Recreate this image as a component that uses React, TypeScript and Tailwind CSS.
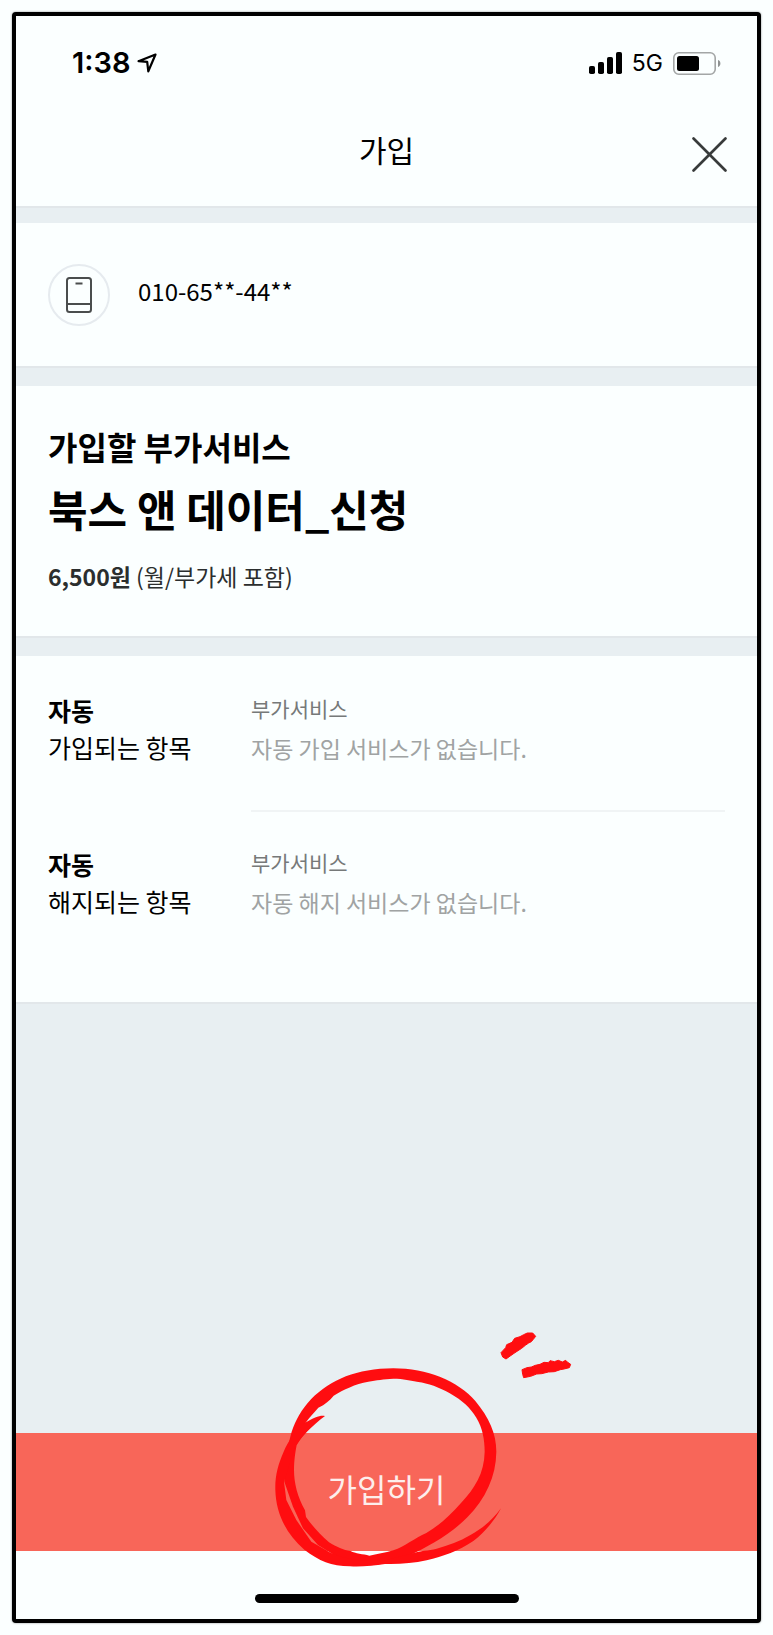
import React from "react";

const autoItems = [
  { action: "가입되는 항목", category: "부가서비스", message: "자동 가입 서비스가 없습니다." },
  { action: "해지되는 항목", category: "부가서비스", message: "자동 해지 서비스가 없습니다." },
];

function StatusBar() {
  return (
    <div className="flex h-[94px] items-center justify-between pl-14 pr-9 font-['Inter',sans-serif] text-black">
      <div className="flex items-center gap-1.5">
        <span className="text-[29px] font-semibold leading-8">1:38</span>
        <svg width="20" height="20" viewBox="0 0 20 20" fill="none" stroke="black" strokeWidth="2.2" strokeLinejoin="round">
          <path d="M18.500 1.500 1.500 8.200 10.200 8.800 11.300 18.300z" />
        </svg>
      </div>
      <div className="flex items-center gap-2.5">
        <svg width="33" height="22" viewBox="0 0 33 22" fill="black">
          <rect x="0" y="14" width="6" height="8" rx="1.8" />
          <rect x="9" y="10" width="6" height="12" rx="1.8" />
          <rect x="18" y="5" width="6" height="17" rx="1.8" />
          <rect x="27" y="0" width="6" height="22" rx="1.8" />
        </svg>
        <span className="text-[23px] leading-8">5G</span>
        <svg width="48" height="23" viewBox="0 0 48 23">
          <rect x="0.8" y="0.8" width="41.4" height="21.4" rx="5" fill="none" stroke="#a3a6a6" strokeWidth="1.6" />
          <rect x="4" y="4" width="22" height="15" rx="2.5" fill="black" />
          <path d="M45 8c1.6.6 2.4 1.9 2.4 3.500S46.600 14.400 45 15z" fill="#8f9292" />
        </svg>
      </div>
    </div>
  );
}

function PhoneIcon() {
  return (
    <svg width="26" height="36" viewBox="0 0 26 36" fill="none" stroke="#4a4d4d" strokeWidth="2">
      <rect x="1" y="1" width="24" height="34" rx="2.500" />
      <path d="M1 27h24M9.500 6.500h7" />
    </svg>
  );
}

// Hand-drawn ring and spark marks around the submit label
function Scribble() {
  return (
    <svg
      className="pointer-events-none absolute -bottom-[18px] left-1/2 -ml-[114px]"
      width="300"
      height="240"
      viewBox="99 57 900 720"
      fill="#ff0d10"
      aria-hidden="true"
    >
      <path
        fillRule="evenodd"
        d="M460 175C560 175 655 213 706 273C747 323 769 370 769 425C768 500 737 565 682 622C627 677 562 710 502 740C460 755 420 764 390 766C340 766 300 748 269 727L234 705L189 655L159 590L133 515C131 455 143 410 155 365C168 330 183 300 213 268C273 208 350 176 460 175Z
        M460 206C490 206 513 212 535 216C562 219 600 233 628 249C670 273 690 293 709 323C728 354 734 390 734 425C733 490 704 535 663 579C627 619 594 649 559 669C524 684 495 709 460 721C435 728 410 733 388 737C370 732 345 731 332 723C310 721 290 711 267 697C241 674 216 647 198 621L195 601C173 561 162 520 162 480C162 452 166 425 170 406C186 381 198 365 210 352L196 340C207 323 221 309 235 293C256 283 269 271 281 257C311 239 345 222 385 215C410 211 430 207 460 206Z"
      />
      <path d="M255 318C243 314 224 321 195 338C165 363 143 396 131 425C114 465 105 495 106 540C108 610 138 672 193 719C238 753 273 768 330 769C360 771 400 768 435 762C480 763 520 760 560 751C610 739 655 723 700 693C735 666 765 630 783 595C755 633 725 656 690 676C660 694 625 706 590 716C565 723 540 721 518 730L440 750C360 760 300 742 269 727L214 695L169 630L139 570L132 515L165 410C180 385 218 345 255 318Z" />
      <path
        stroke="#ff0d10"
        strokeWidth="3"
        strokeLinejoin="round"
        d="M783 128L797 113L800 104L816 97L824 85L840 80L851 74L862 69L878 69L887 79L880 88L874 95L866 99L856 106L845 115L834 122L822 130L812 137L798 147L788 141Z
        M846 179L861 173L874 171L886 166L900 163L912 157L925 158L930 152L943 155L955 151L967 156L977 151L983 157L992 163L988 173L972 177L961 179L943 185L925 186L905 191L890 192L872 199L851 203L848 193Z"
      />
    </svg>
  );
}

export default function App() {
  return (
    <div className="flex min-h-screen flex-col bg-[#fbffff] p-3 font-['Noto_Sans_CJK_KR',sans-serif]">
      <div className="flex flex-1 flex-col rounded-[4px] border-4 border-black bg-[#fbffff] shadow-[0_0_2px_#00000080]">
        <StatusBar />

        <header className="grid h-24 grid-cols-[1fr_auto_1fr] items-center px-[30px] pb-2">
          <h1 className="col-start-2 pb-2.5 text-[30px] leading-10 text-black">가입</h1>
          <button type="button" aria-label="닫기" className="justify-self-end">
            <svg width="35" height="35" viewBox="0 0 34 34" stroke="#383b3b" strokeWidth="2.600" strokeLinecap="round">
              <path d="M1.500 1.500l31 31M32.500 1.500l-31 31" />
            </svg>
          </button>
        </header>

        <main className="flex flex-1 flex-col border-t-2 border-[#e2e7ea] bg-[#e8eff2]">
          <section className="mt-[15px] flex h-[145px] items-center gap-7 border-b-2 border-[#e2e7ea] bg-[#fbffff] px-8">
            <div className="flex h-[62px] w-[62px] items-center justify-center rounded-full border-2 border-[#e6ebef]">
              <PhoneIcon />
            </div>
            <p className="pb-2 text-2xl leading-9 text-black">010-65**-44**</p>
          </section>

          <section className="mt-[18px] border-b-2 border-[#e2e7ea] bg-[#fbffff] px-8 pb-[42px] pt-9 text-black">
            <h2 className="text-[32px] font-bold leading-[48px]">가입할 부가서비스</h2>
            <p className="mt-2 text-[43px] font-bold leading-[60px]">북스 앤 데이터_신청</p>
            <p className="mt-5 text-[23px] leading-9 text-[#2b2e2e]">
              <span className="font-bold">6,500원</span> (월/부가세 포함)
            </p>
          </section>

          <dl className="mt-[18px] border-b-2 border-[#e2e7ea] bg-[#fbffff] px-8 pb-9 pt-0.5">
            {autoItems.map((item, idx) => (
              <div key={item.action} className="grid grid-cols-[203px_1fr]">
                <dt className="pt-[34px] text-[25px] leading-[37px] text-black">
                  <strong className="block font-bold">자동</strong>
                  {item.action}
                </dt>
                <dd
                  className={`border-b-2 pb-[42px] pt-[30px] ${
                    idx < autoItems.length - 1 ? "border-[#f0f4f5]" : "border-transparent"
                  }`}
                >
                  <p className="text-[21px] leading-10 text-[#767979]">{item.category}</p>
                  <p className="text-[23px] leading-10 text-[#a0a3a3]">{item.message}</p>
                </dd>
              </div>
            ))}
          </dl>
        </main>

        <footer>
          <div className="relative">
            <button type="button" className="h-[118px] w-full bg-[#f86659] pb-2 text-[32px] leading-10 text-[#fdeeec]">
              가입하기
            </button>
            <Scribble />
          </div>
          <div className="mx-auto mb-4 mt-[43px] h-[9px] w-[264px] rounded-full bg-black" />
        </footer>
      </div>
    </div>
  );
}
